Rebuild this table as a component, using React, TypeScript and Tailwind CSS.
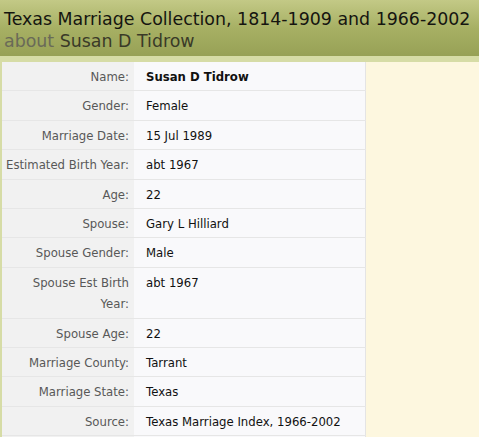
const rows: Array<{ label: string; value: string; bold?: boolean }> = [
  { label: "Name:", value: "Susan D Tidrow", bold: true },
  { label: "Gender:", value: "Female" },
  { label: "Marriage Date:", value: "15 Jul 1989" },
  { label: "Estimated Birth Year:", value: "abt 1967" },
  { label: "Age:", value: "22" },
  { label: "Spouse:", value: "Gary L Hilliard" },
  { label: "Spouse Gender:", value: "Male" },
  { label: "Spouse Est Birth Year:", value: "abt 1967" },
  { label: "Spouse Age:", value: "22" },
  { label: "Marriage County:", value: "Tarrant" },
  { label: "Marriage State:", value: "Texas" },
  { label: "Source:", value: "Texas Marriage Index, 1966-2002" },
  { label: "", value: "" },
]

export default function App() {
  return (
    <div className="w-[479px] h-[437px] overflow-hidden bg-[#d6dca6]">
      <div className="h-[56px] bg-gradient-to-b from-[#c3c986] via-[#a7b064] to-[#97a156] px-[4px] pt-[8px] font-['DejaVu_Sans',sans-serif] text-[17.4px] leading-[22px]">
        <div className="text-[#151510] whitespace-nowrap">
          Texas Marriage Collection, 1814-1909 and 1966-2002
        </div>
        <div className="whitespace-nowrap">
          <span className="text-[#6a6a58]">about </span>
          <span className="text-[#3a3a28]">Susan D Tidrow</span>
        </div>
      </div>
      <div className="flex pt-[6px] pl-[2px] h-full">
        <table className="w-[364px] border-collapse bg-[#f9f9fb] font-['DejaVu_Sans',sans-serif] text-[11.7px] leading-[21.4px] border-r border-[#e4e4e4] self-start">
          <tbody>
            {rows.map(({ label, value, bold }, i) => (
              <tr key={i} className="border-b border-[#e6e6e6]">
                <td className="w-[132px] bg-[#f1f1f1] text-right text-[#585858] align-top pt-[5px] pb-[2px] pr-[5px] pl-[4px]">
                  {label}
                </td>
                <td
                  className={`align-top pt-[5px] pb-[2px] pl-[12px] text-[#111] ${bold ? "font-bold" : ""}`}
                >
                  {value}
                </td>
              </tr>
            ))}
          </tbody>
        </table>
        <div className="flex-1 bg-[#fdf7df]" />
      </div>
    </div>
  )
}
